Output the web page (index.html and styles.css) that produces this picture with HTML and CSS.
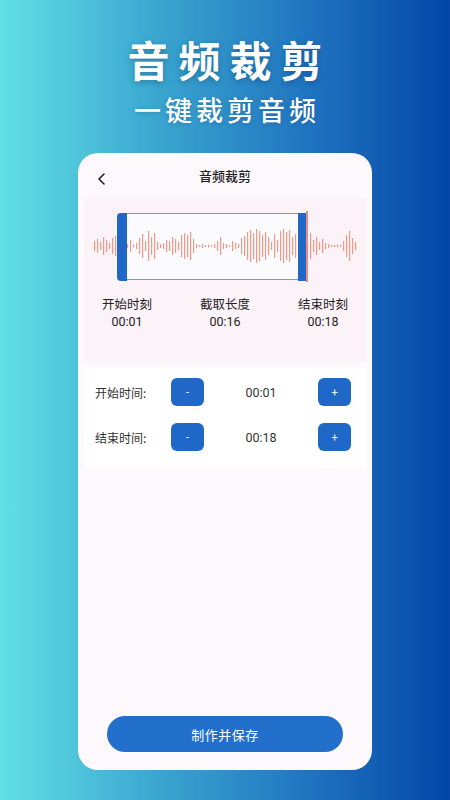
FILE: index.html
```html
<!DOCTYPE html>
<html lang="zh">
<head>
<meta charset="utf-8">
<link rel="stylesheet" href="styles.css">
</head>
<body>
<div class="page">
  <div class="hero">
    <div class="hero-title">音频裁剪</div>
    <div class="hero-sub">一键裁剪音频</div>
  </div>
  <div class="card">
    <div class="card-head">
      <svg class="back" width="12" height="14" viewBox="0 0 12 14"><path d="M8 2 L3 7 L8 12" fill="none" stroke="#222" stroke-width="1.6" stroke-linecap="round" stroke-linejoin="round"/></svg>
      <div class="card-title">音频裁剪</div>
    </div>
    <div class="wave-panel">
      <div class="wave-area">
        <div class="sel-box">
          <div class="handle handle-l"></div>
          <div class="handle handle-r"></div>
        </div>
        <div class="cursor"></div>
        <svg class="wave" id="wave" width="264" height="40" viewBox="0 0 264 40"></svg>
      </div>
      <div class="stats">
        <div class="stat"><div class="stat-label">开始时刻</div><div class="stat-val">00:01</div></div>
        <div class="stat"><div class="stat-label">截取长度</div><div class="stat-val">00:16</div></div>
        <div class="stat"><div class="stat-label">结束时刻</div><div class="stat-val">00:18</div></div>
      </div>
    </div>
    <div class="ctrl-panel">
      <div class="ctrl-row">
        <div class="ctrl-label">开始时间:</div>
        <div class="btn-sm">-</div>
        <div class="ctrl-val">00:01</div>
        <div class="btn-sm">+</div>
      </div>
      <div class="ctrl-row">
        <div class="ctrl-label">结束时间:</div>
        <div class="btn-sm">-</div>
        <div class="ctrl-val">00:18</div>
        <div class="btn-sm">+</div>
      </div>
    </div>
    <div class="spacer"></div>
    <div class="save-btn">制作并保存</div>
  </div>
</div>
<script src="script.js"></script>
</body>
</html>
```
FILE: script.js
```js
(function () {
  var h = [10,14,8,18,12,6,16, 20,14,10,12, 4,12,3,6,16, 24,10,30,18,26,8,4,
    6,12,10,18,14,8,22, 26,22,28,14,4, 2,4,2,3,2,4,10, 18,6, 4,2,10,6,4,16,
    20,28,32,26,34,30,22,28,18,8,24,12,30,34,28,32,18, 24,10, 14,20,8,26,
    12,18,8,14,6,4,2, 2,3,2, 10,22,30,16,8];
  var svg = document.getElementById('wave');
  var ns = 'http://www.w3.org/2000/svg';
  for (var i = 0; i < h.length; i++) {
    var r = document.createElementNS(ns, 'rect');
    r.setAttribute('x', i * 3);
    r.setAttribute('y', 20 - h[i] / 2);
    r.setAttribute('width', 1.2);
    r.setAttribute('height', h[i]);
    r.setAttribute('fill', '#f09a86');
    svg.appendChild(r);
  }
})();
```
FILE: styles.css
```css
* { box-sizing: border-box; }
html, body { margin: 0; padding: 0; }
body {
  width: 450px;
  height: 800px;
  overflow: hidden;
  font-family: "Noto Sans CJK SC", "Noto Sans", sans-serif;
  background: linear-gradient(90deg, #62e0e5 0%, #3aa6d0 35%, #1f72bf 70%, #0246a8 100%);
}
.page {
  display: flex;
  flex-direction: column;
  align-items: center;
  height: 800px;
}
.hero {
  display: flex;
  flex-direction: column;
  align-items: center;
  padding-top: 33px;
  height: 153px;
}
.hero-title {
  color: #fff;
  font-size: 42px;
  font-weight: 700;
  letter-spacing: 9px;
  margin-right: -9px;
  line-height: 52px;
  text-shadow: 0 2px 6px rgba(0, 40, 90, 0.35);
}
.hero-sub {
  color: #fff;
  font-size: 27px;
  font-weight: 500;
  letter-spacing: 4px;
  margin-right: -4px;
  line-height: 36px;
  margin-top: 7px;
  text-shadow: 0 1px 4px rgba(0, 40, 90, 0.25);
}
.card {
  width: 294px;
  height: 617px;
  background: #fdf8fc;
  border-radius: 20px;
  display: flex;
  flex-direction: column;
  padding: 0 6px 18px;
}
.card-head {
  height: 45px;
  display: flex;
  align-items: center;
  justify-content: center;
  position: relative;
}
.back {
  position: absolute;
  left: 12px;
  top: 19px;
}
.card-title {
  font-size: 13px;
  font-weight: 500;
  color: #222;
}
.wave-panel {
  background: #fcf3f9;
  height: 164px;
  display: flex;
  flex-direction: column;
}
.wave-area {
  position: relative;
  height: 86px;
}
.wave {
  position: absolute;
  left: 10px;
  top: 28px;
  z-index: 1;
}
.sel-box {
  position: absolute;
  left: 33px;
  top: 15px;
  width: 190px;
  height: 67px;
  background: #fbfbfe;
  border: 1.5px solid #7f9bb8;
  border-radius: 4px;
}
.handle {
  position: absolute;
  top: -1.5px;
  bottom: -1.5px;
  width: 10px;
  background: #1f68c7;
  z-index: 2;
}
.handle-l { left: -1.5px; border-radius: 4px 0 0 4px; }
.handle-r { right: -1.5px; }
.cursor {
  position: absolute;
  left: 222px;
  top: 13px;
  width: 1.5px;
  height: 71px;
  background: #ee8a80;
  z-index: 3;
}
.stats {
  display: flex;
  justify-content: space-between;
  padding: 11px 10px 0;
}
.stat {
  width: 66px;
  display: flex;
  flex-direction: column;
  align-items: center;
}
.stat-label {
  font-size: 12.5px;
  color: #222;
  line-height: 18px;
}
.stat-val {
  font-size: 12.5px;
  color: #222;
  line-height: 18px;
  font-family: "Roboto", "Noto Sans", sans-serif;
}
.ctrl-panel {
  margin-top: 6px;
  background: #ffffff;
  height: 100px;
  display: flex;
  flex-direction: column;
  padding: 10px 0 0;
  gap: 17px;
}
.ctrl-row {
  display: flex;
  align-items: center;
  height: 28px;
  padding-left: 11px;
}
.ctrl-label {
  width: 76px;
  font-size: 12px;
  color: #333;
}
.btn-sm {
  width: 33px;
  height: 28px;
  border-radius: 6px;
  background: #1f68c7;
  color: #fff;
  font-size: 11px;
  display: flex;
  align-items: center;
  justify-content: center;
  font-family: "Roboto", sans-serif;
}
.ctrl-val {
  width: 114px;
  text-align: center;
  font-size: 12.5px;
  color: #333;
  font-family: "Roboto", "Noto Sans", sans-serif;
}
.spacer { flex: 1; }
.save-btn {
  margin: 0 23px;
  height: 36px;
  border-radius: 18px;
  background: #236fcc;
  color: #fff;
  font-size: 13px;
  display: flex;
  align-items: center;
  justify-content: center;
  letter-spacing: 0.5px;
}
```
